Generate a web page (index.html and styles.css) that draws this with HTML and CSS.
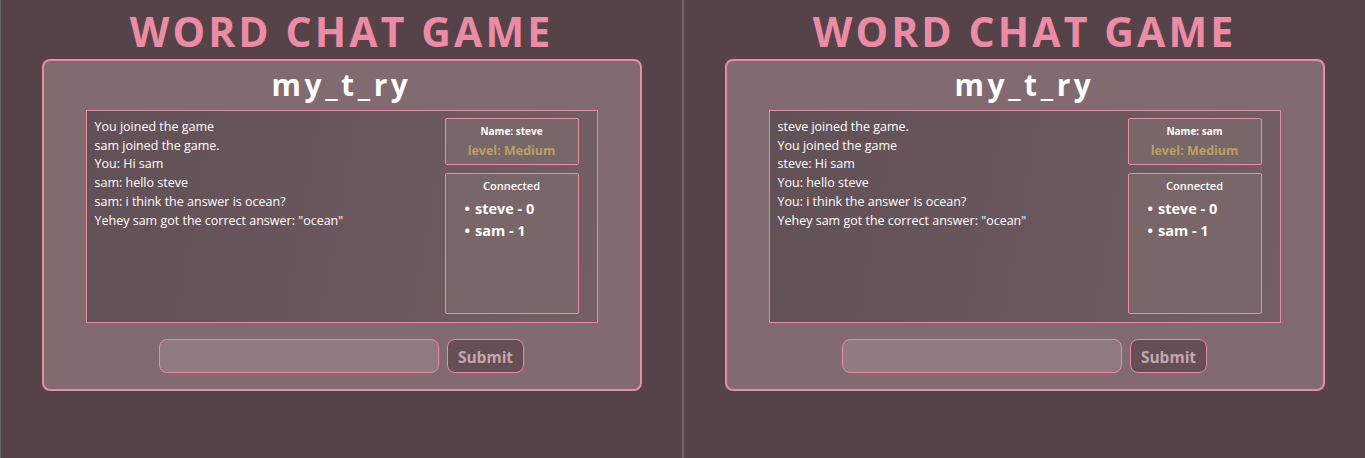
FILE: index.html
```html
<!DOCTYPE html>
<html>
<head>
<meta charset="utf-8">
<link rel="stylesheet" href="styles.css">
</head>
<body>
<div class="screen">
  <section class="pane pane-left">
    <h1 class="title">WORD CHAT GAME</h1>
    <div class="card">
      <h2 class="room">my_t_ry</h2>
      <div class="chat">
        <div class="messages">
          <p>You joined the game</p>
          <p>sam joined the game.</p>
          <p>You: Hi sam</p>
          <p>sam: hello steve</p>
          <p>sam: i think the answer is ocean?</p>
          <p>Yehey sam got the correct answer: "ocean"</p>
        </div>
        <div class="side">
          <div class="info">
            <div class="name">Name: steve</div>
            <div class="level">level: Medium</div>
          </div>
          <div class="connected">
            <div class="conn-title">Connected</div>
            <ul class="players">
              <li>steve - 0</li>
              <li>sam - 1</li>
            </ul>
          </div>
        </div>
      </div>
      <form class="send">
        <input class="field" type="text">
        <button class="submit" type="button">Submit</button>
      </form>
    </div>
  </section>
  <section class="pane pane-right">
    <h1 class="title">WORD CHAT GAME</h1>
    <div class="card">
      <h2 class="room">my_t_ry</h2>
      <div class="chat">
        <div class="messages">
          <p>steve joined the game.</p>
          <p>You joined the game</p>
          <p>steve: Hi sam</p>
          <p>You: hello steve</p>
          <p>You: i think the answer is ocean?</p>
          <p>Yehey sam got the correct answer: "ocean"</p>
        </div>
        <div class="side">
          <div class="info">
            <div class="name">Name: sam</div>
            <div class="level">level: Medium</div>
          </div>
          <div class="connected">
            <div class="conn-title">Connected</div>
            <ul class="players">
              <li>steve - 0</li>
              <li>sam - 1</li>
            </ul>
          </div>
        </div>
      </div>
      <form class="send">
        <input class="field" type="text">
        <button class="submit" type="button">Submit</button>
      </form>
    </div>
  </section>
</div>
</body>
</html>
```

FILE: styles.css
```css
html, body {
  margin: 0;
  padding: 0;
  background: #56434a;
  overflow: hidden;
  width: 1365px;
  height: 458px;
}

.screen {
  display: flex;
  height: 458px;
  font-family: "Open Sans", "Noto Sans", sans-serif;
}

.pane {
  flex: none;
  box-sizing: border-box;
  height: 458px;
  border-left: 1px solid #6e6a6b;
  display: flex;
  flex-direction: column;
  align-items: center;
  background: #56434a;
}

.pane-left {
  width: 683px;
  border-right: 1px solid #6e6a6b;
}

.pane-right {
  width: 682px;
}

.title {
  margin: 6px 0 0;
  height: 53px;
  font-size: 41px;
  line-height: 50px;
  font-weight: 700;
  letter-spacing: 3.1px;
  color: #ec8ba5;
}

.card {
  box-sizing: border-box;
  width: 600px;
  height: 332px;
  border: 2px solid #ec8ba5;
  border-radius: 8px;
  background: #816a70;
  display: flex;
  flex-direction: column;
  align-items: center;
}

.room {
  margin: 4px 0 0;
  height: 45px;
  font-size: 30px;
  line-height: 40px;
  font-weight: 700;
  letter-spacing: 3.6px;
  color: #ffffff;
}

.chat {
  box-sizing: border-box;
  width: 512px;
  height: 213px;
  border: 1px solid #ec8ba5;
  background: linear-gradient(100deg, #625057 0%, #6b585e 60%, #735f64 100%);
  display: flex;
  justify-content: space-between;
  padding: 7px 18px 8px 8px;
}

.messages {
  font-size: 12.5px;
  line-height: 18.7px;
  color: #ffffff;
}

.messages p {
  margin: 0;
}

.side {
  width: 134px;
  display: flex;
  flex-direction: column;
  gap: 8px;
}

.info,
.connected {
  box-sizing: border-box;
  border: 1px solid #ec8ba5;
  border-radius: 2px;
  background: #796669;
  text-align: center;
}

.info {
  height: 47px;
  padding-top: 4px;
}

.name {
  font-size: 10px;
  line-height: 16px;
  font-weight: 700;
  color: #ffffff;
}

.level {
  margin-top: 2px;
  font-size: 12.5px;
  line-height: 20px;
  font-weight: 700;
  color: #b6a263;
}

.connected {
  flex: 1;
  padding-top: 5px;
}

.conn-title {
  font-size: 11px;
  line-height: 14px;
  font-weight: 600;
  color: #ffffff;
}

.players {
  margin: 5px 0 0;
  padding: 0 0 0 19px;
  list-style: none;
  text-align: left;
  font-size: 14.5px;
  line-height: 21.5px;
  font-weight: 700;
  color: #ffffff;
}

.players li::before {
  content: "•";
  margin-right: 5px;
}

.send {
  margin: 16px 0 0;
  display: flex;
  gap: 8px;
}

.field {
  box-sizing: border-box;
  width: 280px;
  height: 34px;
  margin: 0;
  border: 1px solid #ec8ba5;
  border-radius: 8px;
  background: #8f7a7e;
  outline: none;
}

.submit {
  box-sizing: border-box;
  width: 77px;
  height: 34px;
  margin: 0;
  padding: 2px 0 0;
  border: 1px solid #ec8ba5;
  border-radius: 8px;
  background: #654f55;
  color: #c3a7ad;
  font-family: "Open Sans", "Noto Sans", sans-serif;
  font-size: 15.5px;
  font-weight: 700;
}
```
